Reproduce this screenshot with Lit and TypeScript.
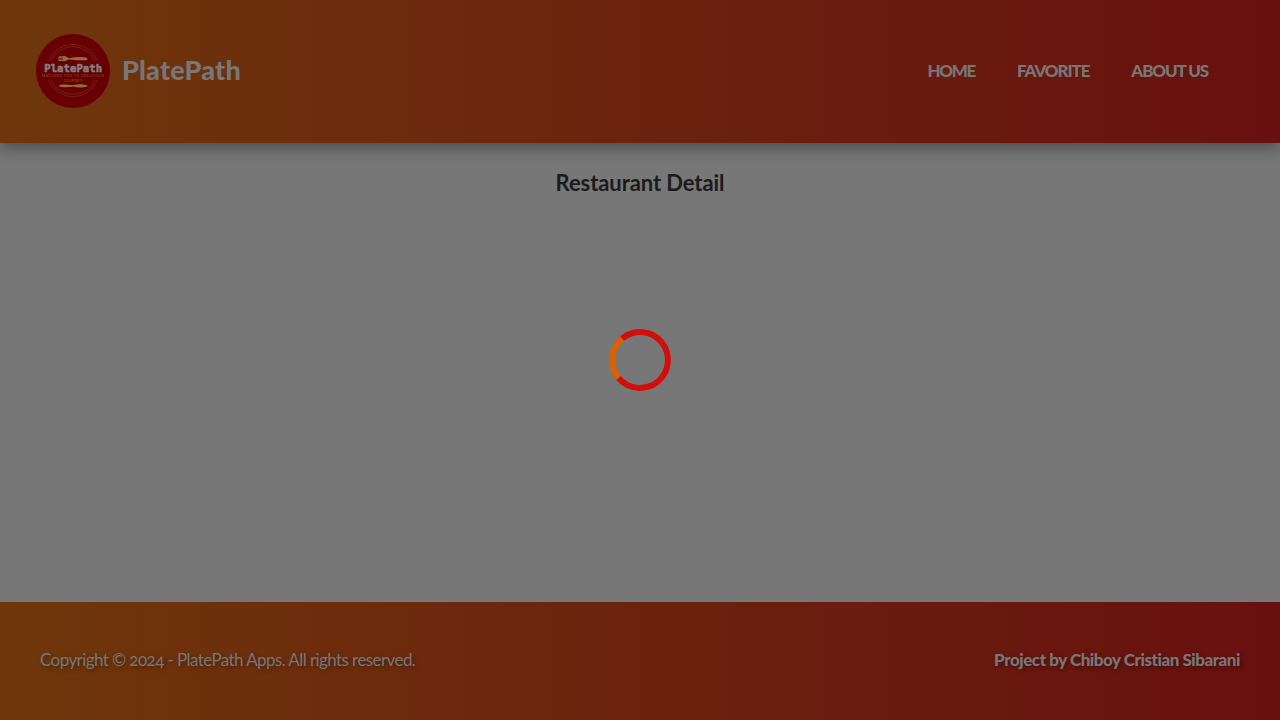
import { LitElement, html, css, svg } from "lit";
import { customElement } from "lit/decorators.js";

@customElement("plate-logo")
class PlateLogo extends LitElement {
  static styles = css`
    :host { display: block; width: 74px; height: 74px; }
    svg { display: block; }
    .name { font: 700 10.4px "DejaVu Sans Mono", monospace; fill: #858080; stroke: #858080; stroke-width: 0.5; }
    .tag { font: 700 3.6px "Liberation Sans", sans-serif; fill: #7c3c1c; }
  `;
  render() {
    return html`<svg width="74" height="74" viewBox="0 0 74 74">
      <circle cx="37" cy="37" r="37" fill="#670004" />
      ${svg`<g fill="none" stroke="#7a2b1c" stroke-width=".8">
        <path d="M12.5 27A26.3 26.3 0 0 1 61.5 27M15 27A24 24 0 0 1 59 27M12.5 46A26.3 26.3 0 0 0 61.5 46M15 46A24 24 0 0 0 59 46" />
      </g>`}
      <path fill="#927039" d="M33 24.2Q43 22.4 50 23.5Q53 25 50 26.3Q42 26.6 33 25.5L29 27H22.5V26H27V25.5H22V24.6H27V24H22V23.2H27V22.7H23V22H29Z" />
      <path fill="#927039" d="M23 51.5Q25 50 35 51H37Q46 49.3 50 51Q53 52 50 53Q43 54 37 52.5L34 53Q26 53.5 23 52.5Z" />
      <text class="name" x="8.2" y="38.4" textLength="58" lengthAdjust="spacingAndGlyphs">PlatePath</text>
      <text class="tag" x="6" y="43.3" textLength="62">MATCHES YOU TO DELICIOUS</text>
      <text class="tag" x="27.5" y="47.8" textLength="19">JOURNEY</text>
    </svg>`;
  }
}

@customElement("app-root")
class AppRoot extends LitElement {
  static styles = css`
    :host {
      display: flex; flex-direction: column; height: 720px; position: relative; overflow: hidden;
      background: #777; color: #777; font-family: Lato, sans-serif; font-size: 17px;
    }
    header, footer {
      display: flex; align-items: center; justify-content: space-between; box-sizing: border-box;
      background: linear-gradient(90deg, #6f370b, #6b230e 50%, #68100f); white-space: nowrap;
    }
    header { height: 143px; padding: 0 72px 1px 36px; box-shadow: 0 4px 16px rgba(0, 0, 0, 0.4); }
    .brand { display: flex; align-items: center; gap: 12px; }
    .title { font-size: 27px; font-weight: 900; letter-spacing: 0.18px; padding-bottom: 3px; }
    nav { display: flex; gap: 42px; font-weight: 900; padding-bottom: 2px; }
    nav span { letter-spacing: -1.1px; }
    nav .home { letter-spacing: -1.3px; }
    main { flex: 1; text-align: center; }
    h1 { margin: 25px 0 0; font-size: 22px; line-height: 30px; font-weight: 700; color: #1b1b1b; letter-spacing: -0.08px; }
    footer { height: 118px; padding: 0 40px 4px; text-shadow: 2px 2px 4px rgba(0, 0, 0, 0.35); }
    .copy { letter-spacing: -0.58px; font-variant-numeric: oldstyle-nums; }
    .author { font-weight: 900; letter-spacing: -0.46px; }
    .overlay { position: absolute; inset: 0; display: grid; place-items: center; }
    .spinner {
      box-sizing: border-box; width: 62px; height: 62px; border-radius: 50%;
      border: 6px solid #d40c0c; border-left-color: #dc6000; transform: rotate(5deg);
    }
  `;
  render() {
    return html`
      <header>
        <div class="brand"><plate-logo></plate-logo><span class="title">PlatePath</span></div>
        <nav><span class="home">HOME</span><span class="fav">FAVORITE</span><span class="about">ABOUT US</span></nav>
      </header>
      <main><h1><span class="heading">Restaurant Detail</span></h1></main>
      <footer>
        <span class="copy">Copyright © 2024 - PlatePath Apps. All rights reserved.</span>
        <span class="author">Project by Chiboy Cristian Sibarani</span>
      </footer>
      <div class="overlay"><div class="spinner"></div></div>
    `;
  }
}
